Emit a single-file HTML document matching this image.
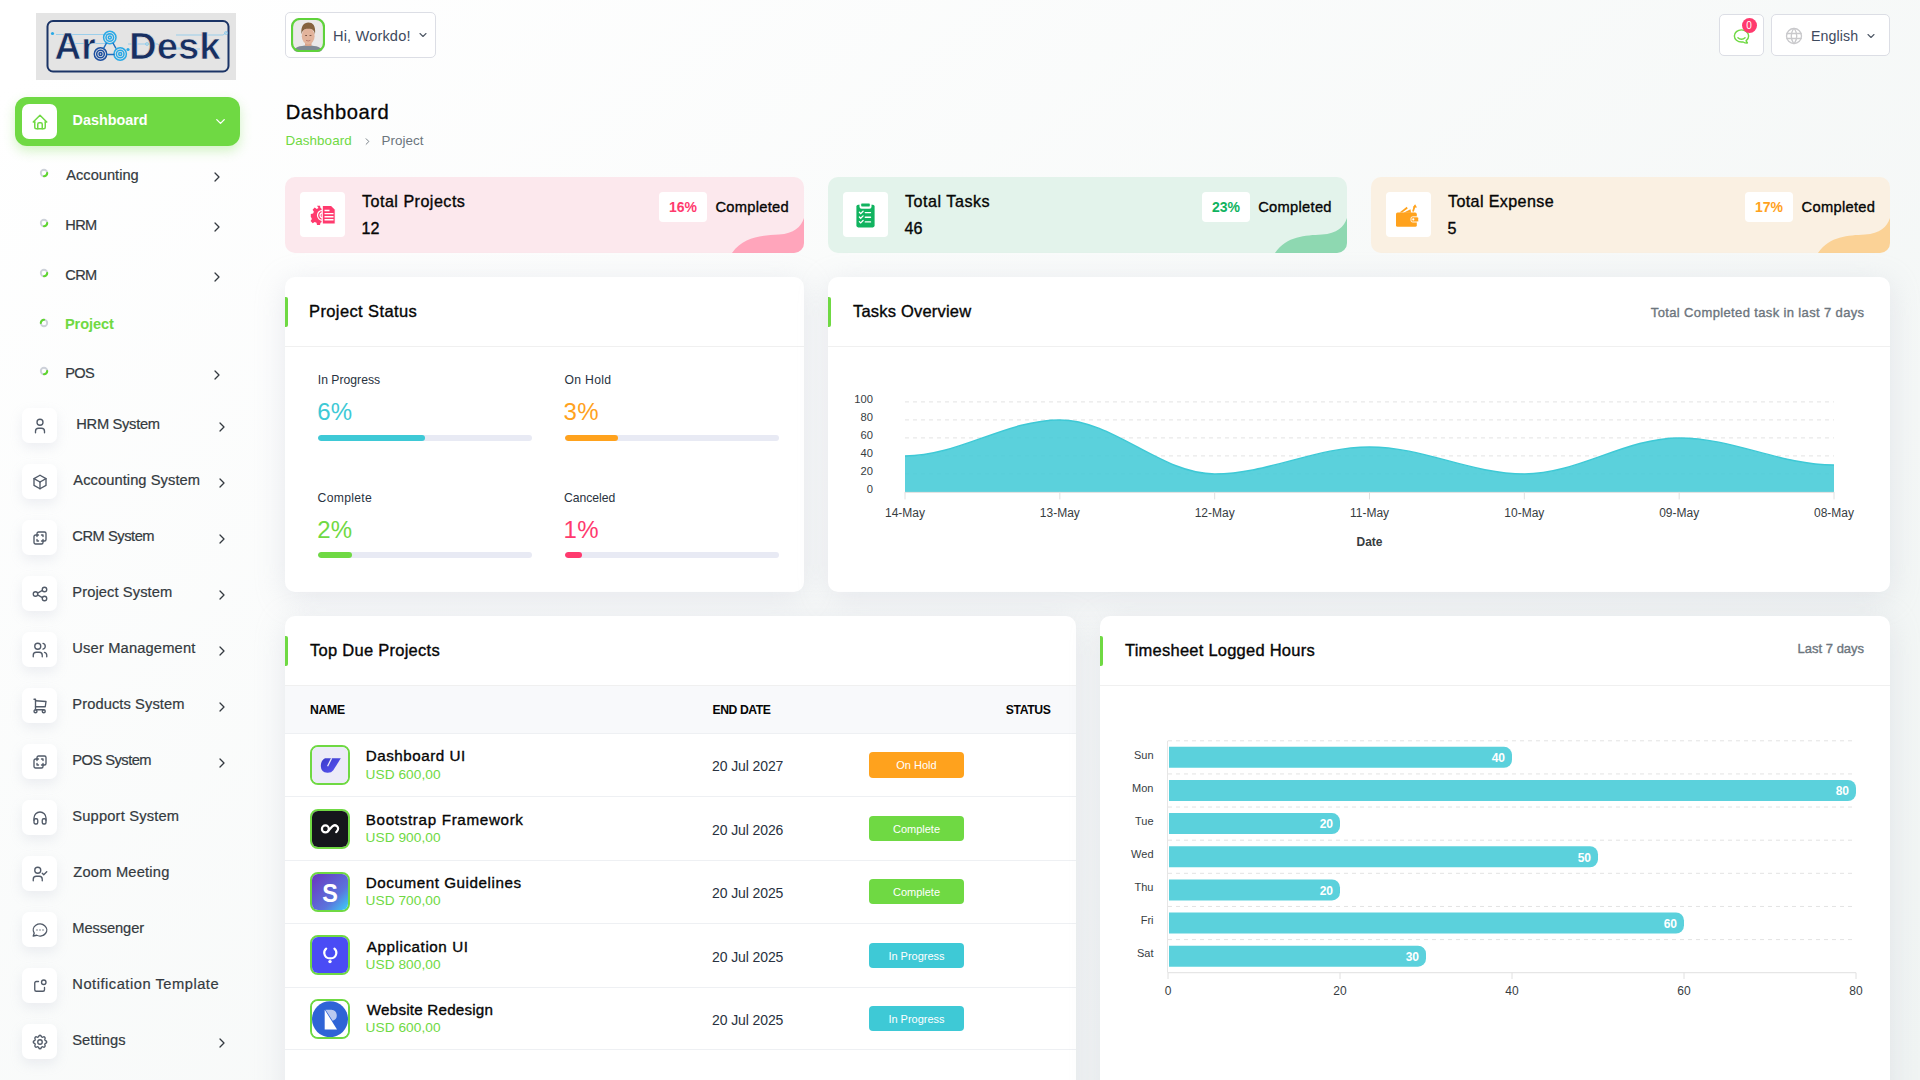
<!DOCTYPE html>
<html><head><meta charset="utf-8"><title>Dashboard</title><style>
*{margin:0;padding:0;box-sizing:border-box}
html,body{width:1920px;height:1080px;overflow:hidden}
body{font-family:"Liberation Sans",sans-serif;position:relative;
 background:linear-gradient(141.55deg, rgba(240,244,243,0) 3.46%, #f0f4f3 99.86%), #ffffff;}
.t{position:absolute;white-space:nowrap;line-height:1}
.ic{position:absolute;display:block}
.abs{position:absolute}
.card{position:absolute;background:#fff;border-radius:10px;box-shadow:0 6px 30px rgba(182,186,203,0.30)}
.ibox{position:absolute;width:35px;height:35px;background:#fff;border-radius:7px;box-shadow:0 5px 12px rgba(182,186,203,0.22)}
.dot{position:absolute;width:8px;height:8px;border-radius:50%;border:1.6px solid #c6cad3;border-right-color:#6fd943;border-bottom-color:#6fd943;transform:rotate(-20deg)}
.gbar{position:absolute;width:3px;height:30px;background:#6fd943;border-radius:0 2px 2px 0}
.hr{position:absolute;height:1px;background:#f0f0f0}
.badge{position:absolute;width:95px;height:25.5px;border-radius:4px;color:#fff;font-size:11px;line-height:27px;text-align:center}
.pbar{position:absolute;height:6px;border-radius:3px;background:#e8eaf4;overflow:hidden}
.pbar i{position:absolute;left:0;top:0;height:6px;border-radius:3px}
.stat{position:absolute;top:177px;width:519px;height:76px;border-radius:10px;overflow:hidden}
.sibox{position:absolute;left:15px;top:15px;width:45px;height:45px;background:#fff;border-radius:4px}
.spct{position:absolute;top:192px;width:48px;height:30px;background:#fff;border-radius:4px;font-size:14px;font-weight:700;line-height:30px;text-align:center}
.pic{position:absolute;width:40px;height:40px;border:2px solid #6fd943;border-radius:8px;overflow:hidden}
</style></head><body>
<svg class="abs" style="left:36px;top:13px" width="200" height="67" viewBox="0 0 200 67">
<rect x="0" y="0" width="200" height="67" fill="#e4e4e4"/>
<rect x="11.5" y="8" width="181" height="50.5" rx="5.5" fill="none" stroke="#1b3466" stroke-width="2"/>
<g stroke="#7cc6ee" stroke-width="0.7" fill="none"><path d="M20 21.5h55M30 30.5h40M92 31h30l3 4h25M140 22h47l4-3M124 36h40"/><circle cx="111" cy="31" r="1.5"/><circle cx="190" cy="20" r="1.5"/></g>
<text x="18.5" y="46.2" font-family="Liberation Sans" font-weight="700" font-size="37.5" fill="#172f61" stroke="#e4e4e4" stroke-width="0.7" textLength="41" lengthAdjust="spacingAndGlyphs">Ar</text>
<text x="93" y="46.2" font-family="Liberation Sans" font-weight="700" font-size="37.5" fill="#172f61" stroke="#e4e4e4" stroke-width="0.7" textLength="91.5" lengthAdjust="spacingAndGlyphs">Desk</text>
<circle cx="16.5" cy="20.5" r="1.6" fill="#2aa9e6"/><circle cx="92" cy="36.5" r="1.6" fill="#2aa9e6"/>
<g fill="none" stroke-width="1.5">
<circle cx="73.8" cy="24.5" r="6.2" stroke="#2aa9e6"/><circle cx="73.8" cy="24.5" r="3.8" stroke="#2aa9e6"/><circle cx="73.8" cy="24.5" r="1.5" stroke="#2aa9e6"/>
<circle cx="64.5" cy="41" r="6.2" stroke="#1d4fa0"/><circle cx="64.5" cy="41" r="3.8" stroke="#1d4fa0"/><circle cx="64.5" cy="41" r="1.5" stroke="#1d4fa0"/>
<circle cx="84.2" cy="41" r="6.2" stroke="#2aa9e6"/><circle cx="84.2" cy="41" r="3.8" stroke="#2aa9e6"/><circle cx="84.2" cy="41" r="1.5" stroke="#2aa9e6"/>
<path d="M70.5 30l-3 5.5M77 30l3 5.5M70.5 41.5h8" stroke="#1d6fc0"/>
</g></svg>
<div class="abs" style="left:15px;top:97px;width:225px;height:49px;background:#6fd943;border-radius:12px;box-shadow:0 5px 12px rgba(111,217,67,0.30)"></div>
<div class="abs" style="left:22px;top:104px;width:35px;height:35px;background:#fff;border-radius:7px"></div>
<svg class="ic" style="left:30.5px;top:113px;" width="18" height="18" viewBox="0 0 24 24" fill="none" stroke="#6fd943" stroke-width="2" stroke-linecap="round" stroke-linejoin="round"><path d="M5 12l-2 0l9 -9l9 9l-2 0"/><path d="M5 12v7a2 2 0 0 0 2 2h10a2 2 0 0 0 2 -2v-7"/><path d="M9 21v-6a2 2 0 0 1 2 -2h2a2 2 0 0 1 2 2v6"/></svg>
<div class="t" style="left:72.50px;top:112.64px;font-size:14.4px;color:#fff;font-weight:700;">Dashboard</div>
<svg class="ic" style="left:212.6px;top:114px;" width="15" height="15" viewBox="0 0 24 24" fill="none" stroke="#fff" stroke-width="2.2" stroke-linecap="round" stroke-linejoin="round"><path d="M6 9l6 6l6 -6"/></svg>
<svg class="abs" style="left:38px;top:167.0px" width="12" height="12" viewBox="0 0 12 12"><circle cx="6" cy="6" r="3.2" fill="none" stroke="#cdd1d9" stroke-width="1.9"/><path d="M9.2 6A3.2 3.2 0 0 1 6 9.2" fill="none" stroke="#5fd62f" stroke-width="2.1" stroke-linecap="round"/></svg>
<div class="t" style="left:66.30px;top:167.85px;font-size:14.6px;color:#343a40;-webkit-text-stroke:0.2px #343a40;letter-spacing:0.023px;">Accounting</div>
<svg class="ic" style="left:208.5px;top:169.1px;" width="16" height="16" viewBox="0 0 24 24" fill="none" stroke="#343a40" stroke-width="1.9" stroke-linecap="round" stroke-linejoin="round"><path d="M9 6l6 6l-6 6"/></svg>
<svg class="abs" style="left:38px;top:216.7px" width="12" height="12" viewBox="0 0 12 12"><circle cx="6" cy="6" r="3.2" fill="none" stroke="#cdd1d9" stroke-width="1.9"/><path d="M9.2 6A3.2 3.2 0 0 1 6 9.2" fill="none" stroke="#5fd62f" stroke-width="2.1" stroke-linecap="round"/></svg>
<div class="t" style="left:65.30px;top:217.55px;font-size:14.6px;color:#343a40;-webkit-text-stroke:0.2px #343a40;letter-spacing:-0.700px;">HRM</div>
<svg class="ic" style="left:208.5px;top:218.79999999999998px;" width="16" height="16" viewBox="0 0 24 24" fill="none" stroke="#343a40" stroke-width="1.9" stroke-linecap="round" stroke-linejoin="round"><path d="M9 6l6 6l-6 6"/></svg>
<svg class="abs" style="left:38px;top:267.0px" width="12" height="12" viewBox="0 0 12 12"><circle cx="6" cy="6" r="3.2" fill="none" stroke="#cdd1d9" stroke-width="1.9"/><path d="M9.2 6A3.2 3.2 0 0 1 6 9.2" fill="none" stroke="#5fd62f" stroke-width="2.1" stroke-linecap="round"/></svg>
<div class="t" style="left:65.30px;top:267.85px;font-size:14.6px;color:#343a40;-webkit-text-stroke:0.2px #343a40;letter-spacing:-0.700px;">CRM</div>
<svg class="ic" style="left:208.5px;top:269.1px;" width="16" height="16" viewBox="0 0 24 24" fill="none" stroke="#343a40" stroke-width="1.9" stroke-linecap="round" stroke-linejoin="round"><path d="M9 6l6 6l-6 6"/></svg>
<svg class="abs" style="left:38px;top:316.8px" width="12" height="12" viewBox="0 0 12 12"><circle cx="6" cy="6" r="3.2" fill="none" stroke="#cdd1d9" stroke-width="1.9"/><path d="M2.8 6A3.2 3.2 0 0 1 6 2.8" fill="none" stroke="#5fd62f" stroke-width="2.1" stroke-linecap="round"/></svg>
<div class="t" style="left:64.90px;top:317.35px;font-size:14.6px;color:#6fd943;font-weight:700;letter-spacing:-0.067px;">Project</div>
<svg class="abs" style="left:38px;top:364.7px" width="12" height="12" viewBox="0 0 12 12"><circle cx="6" cy="6" r="3.2" fill="none" stroke="#cdd1d9" stroke-width="1.9"/><path d="M9.2 6A3.2 3.2 0 0 1 6 9.2" fill="none" stroke="#5fd62f" stroke-width="2.1" stroke-linecap="round"/></svg>
<div class="t" style="left:65.30px;top:365.55px;font-size:14.6px;color:#343a40;-webkit-text-stroke:0.2px #343a40;letter-spacing:-0.700px;">POS</div>
<svg class="ic" style="left:208.5px;top:366.8px;" width="16" height="16" viewBox="0 0 24 24" fill="none" stroke="#343a40" stroke-width="1.9" stroke-linecap="round" stroke-linejoin="round"><path d="M9 6l6 6l-6 6"/></svg>
<div class="ibox" style="left:22px;top:408px"></div>
<svg class="ic" style="left:31.0px;top:417.4px;" width="18" height="18" viewBox="0 0 24 24" fill="none" stroke="#525b69" stroke-width="1.8" stroke-linecap="round" stroke-linejoin="round"><path d="M8 7a4 4 0 1 0 8 0a4 4 0 0 0 -8 0"/><path d="M6 21v-2a4 4 0 0 1 4 -4h4a4 4 0 0 1 4 4v2"/></svg>
<div class="t" style="left:76.30px;top:417.10px;font-size:14.7px;color:#343a40;-webkit-text-stroke:0.2px #343a40;letter-spacing:-0.312px;">HRM System</div>
<svg class="ic" style="left:213.5px;top:419px;" width="16" height="16" viewBox="0 0 24 24" fill="none" stroke="#343a40" stroke-width="1.9" stroke-linecap="round" stroke-linejoin="round"><path d="M9 6l6 6l-6 6"/></svg>
<div class="ibox" style="left:22px;top:464px"></div>
<svg class="ic" style="left:31.0px;top:473.4px;" width="18" height="18" viewBox="0 0 24 24" fill="none" stroke="#525b69" stroke-width="1.8" stroke-linecap="round" stroke-linejoin="round"><path d="M12 3l8 4.5l0 9l-8 4.5l-8 -4.5l0 -9l8 -4.5"/><path d="M12 12l8 -4.5"/><path d="M12 12l0 9"/><path d="M12 12l-8 -4.5"/></svg>
<div class="t" style="left:73.30px;top:473.10px;font-size:14.7px;color:#343a40;-webkit-text-stroke:0.2px #343a40;letter-spacing:0.062px;">Accounting System</div>
<svg class="ic" style="left:213.5px;top:475px;" width="16" height="16" viewBox="0 0 24 24" fill="none" stroke="#343a40" stroke-width="1.9" stroke-linecap="round" stroke-linejoin="round"><path d="M9 6l6 6l-6 6"/></svg>
<div class="ibox" style="left:22px;top:520px"></div>
<svg class="ic" style="left:31.0px;top:529.4px;" width="18" height="18" viewBox="0 0 24 24" fill="none" stroke="#525b69" stroke-width="1.8" stroke-linecap="round" stroke-linejoin="round"><path d="M16 16v2a2 2 0 0 1 -2 2h-8a2 2 0 0 1 -2 -2v-8a2 2 0 0 1 2 -2h2v-2a2 2 0 0 1 2 -2h8a2 2 0 0 1 2 2v8a2 2 0 0 1 -2 2h-2"/><path d="M10 8l-2 0l0 2"/><path d="M8 14l0 2l2 0"/><path d="M14 8l2 0l0 2"/><path d="M16 14l0 2l-2 0"/></svg>
<div class="t" style="left:72.30px;top:529.10px;font-size:14.7px;color:#343a40;-webkit-text-stroke:0.2px #343a40;letter-spacing:-0.466px;">CRM System</div>
<svg class="ic" style="left:213.5px;top:531px;" width="16" height="16" viewBox="0 0 24 24" fill="none" stroke="#343a40" stroke-width="1.9" stroke-linecap="round" stroke-linejoin="round"><path d="M9 6l6 6l-6 6"/></svg>
<div class="ibox" style="left:22px;top:576px"></div>
<svg class="ic" style="left:31.0px;top:585.4px;" width="18" height="18" viewBox="0 0 24 24" fill="none" stroke="#525b69" stroke-width="1.8" stroke-linecap="round" stroke-linejoin="round"><path d="M3 12a3 3 0 1 0 6 0a3 3 0 1 0 -6 0"/><path d="M15 6a3 3 0 1 0 6 0a3 3 0 1 0 -6 0"/><path d="M15 18a3 3 0 1 0 6 0a3 3 0 1 0 -6 0"/><path d="M8.7 10.7l6.6 -3.4"/><path d="M8.7 13.3l6.6 3.4"/></svg>
<div class="t" style="left:72.30px;top:585.10px;font-size:14.7px;color:#343a40;-webkit-text-stroke:0.2px #343a40;letter-spacing:0.093px;">Project System</div>
<svg class="ic" style="left:213.5px;top:587px;" width="16" height="16" viewBox="0 0 24 24" fill="none" stroke="#343a40" stroke-width="1.9" stroke-linecap="round" stroke-linejoin="round"><path d="M9 6l6 6l-6 6"/></svg>
<div class="ibox" style="left:22px;top:632px"></div>
<svg class="ic" style="left:31.0px;top:641.4px;" width="18" height="18" viewBox="0 0 24 24" fill="none" stroke="#525b69" stroke-width="1.8" stroke-linecap="round" stroke-linejoin="round"><path d="M5 7a4 4 0 1 0 8 0a4 4 0 1 0 -8 0"/><path d="M3 21v-2a4 4 0 0 1 4 -4h4a4 4 0 0 1 4 4v2"/><path d="M16 3.13a4 4 0 0 1 0 7.75"/><path d="M21 21v-2a4 4 0 0 0 -3 -3.85"/></svg>
<div class="t" style="left:72.30px;top:641.10px;font-size:14.7px;color:#343a40;-webkit-text-stroke:0.2px #343a40;letter-spacing:0.157px;">User Management</div>
<svg class="ic" style="left:213.5px;top:643px;" width="16" height="16" viewBox="0 0 24 24" fill="none" stroke="#343a40" stroke-width="1.9" stroke-linecap="round" stroke-linejoin="round"><path d="M9 6l6 6l-6 6"/></svg>
<div class="ibox" style="left:22px;top:688px"></div>
<svg class="ic" style="left:31.0px;top:697.4px;" width="18" height="18" viewBox="0 0 24 24" fill="none" stroke="#525b69" stroke-width="1.8" stroke-linecap="round" stroke-linejoin="round"><path d="M4 19a2 2 0 1 0 4 0a2 2 0 1 0 -4 0"/><path d="M15 19a2 2 0 1 0 4 0a2 2 0 1 0 -4 0"/><path d="M17 17h-11v-14h-2"/><path d="M6 5l14 1l-1 7h-13"/></svg>
<div class="t" style="left:72.30px;top:697.10px;font-size:14.7px;color:#343a40;-webkit-text-stroke:0.2px #343a40;letter-spacing:0.086px;">Products System</div>
<svg class="ic" style="left:213.5px;top:699px;" width="16" height="16" viewBox="0 0 24 24" fill="none" stroke="#343a40" stroke-width="1.9" stroke-linecap="round" stroke-linejoin="round"><path d="M9 6l6 6l-6 6"/></svg>
<div class="ibox" style="left:22px;top:744px"></div>
<svg class="ic" style="left:31.0px;top:753.4px;" width="18" height="18" viewBox="0 0 24 24" fill="none" stroke="#525b69" stroke-width="1.8" stroke-linecap="round" stroke-linejoin="round"><path d="M16 16v2a2 2 0 0 1 -2 2h-8a2 2 0 0 1 -2 -2v-8a2 2 0 0 1 2 -2h2v-2a2 2 0 0 1 2 -2h8a2 2 0 0 1 2 2v8a2 2 0 0 1 -2 2h-2"/><path d="M10 8l-2 0l0 2"/><path d="M8 14l0 2l2 0"/><path d="M14 8l2 0l0 2"/><path d="M16 14l0 2l-2 0"/></svg>
<div class="t" style="left:72.30px;top:753.10px;font-size:14.7px;color:#343a40;-webkit-text-stroke:0.2px #343a40;letter-spacing:-0.533px;">POS System</div>
<svg class="ic" style="left:213.5px;top:755px;" width="16" height="16" viewBox="0 0 24 24" fill="none" stroke="#343a40" stroke-width="1.9" stroke-linecap="round" stroke-linejoin="round"><path d="M9 6l6 6l-6 6"/></svg>
<div class="ibox" style="left:22px;top:800px"></div>
<svg class="ic" style="left:31.0px;top:809.4px;" width="18" height="18" viewBox="0 0 24 24" fill="none" stroke="#525b69" stroke-width="1.8" stroke-linecap="round" stroke-linejoin="round"><path d="M4 15a2 2 0 0 1 2 -2h1a2 2 0 0 1 2 2v3a2 2 0 0 1 -2 2h-1a2 2 0 0 1 -2 -2z"/><path d="M15 15a2 2 0 0 1 2 -2h1a2 2 0 0 1 2 2v3a2 2 0 0 1 -2 2h-1a2 2 0 0 1 -2 -2z"/><path d="M4 15v-3a8 8 0 0 1 16 0v3"/></svg>
<div class="t" style="left:72.30px;top:809.10px;font-size:14.7px;color:#343a40;-webkit-text-stroke:0.2px #343a40;letter-spacing:0.168px;">Support System</div>
<div class="ibox" style="left:22px;top:856px"></div>
<svg class="ic" style="left:31.0px;top:865.4px;" width="18" height="18" viewBox="0 0 24 24" fill="none" stroke="#525b69" stroke-width="1.8" stroke-linecap="round" stroke-linejoin="round"><path d="M5 7a4 4 0 1 0 8 0a4 4 0 1 0 -8 0"/><path d="M3 21v-2a4 4 0 0 1 4 -4h4a4 4 0 0 1 4 4v2"/><path d="M15 11l2 2l4 -4"/></svg>
<div class="t" style="left:73.30px;top:865.10px;font-size:14.7px;color:#343a40;-webkit-text-stroke:0.2px #343a40;letter-spacing:0.200px;">Zoom Meeting</div>
<div class="ibox" style="left:22px;top:912px"></div>
<svg class="ic" style="left:31.0px;top:921.4px;" width="18" height="18" viewBox="0 0 24 24" fill="none" stroke="#525b69" stroke-width="1.8" stroke-linecap="round" stroke-linejoin="round"><path d="M3 20l1.3 -3.9c-2.324 -3.437 -1.426 -7.872 2.1 -10.374c3.526 -2.501 8.59 -2.296 11.845 .48c3.255 2.777 3.695 7.266 1.029 10.501c-2.666 3.235 -7.615 4.215 -11.574 2.293l-4.7 1"/><path d="M8 12l0 .01"/><path d="M12 12l0 .01"/><path d="M16 12l0 .01"/></svg>
<div class="t" style="left:72.30px;top:921.10px;font-size:14.7px;color:#343a40;-webkit-text-stroke:0.2px #343a40;letter-spacing:-0.102px;">Messenger</div>
<div class="ibox" style="left:22px;top:968px"></div>
<svg class="ic" style="left:31.0px;top:977.4px;" width="18" height="18" viewBox="0 0 24 24" fill="none" stroke="#525b69" stroke-width="1.8" stroke-linecap="round" stroke-linejoin="round"><path d="M10 6h-3a2 2 0 0 0 -2 2v9a2 2 0 0 0 2 2h9a2 2 0 0 0 2 -2v-3"/><path d="M14 7a3 3 0 1 0 6 0a3 3 0 1 0 -6 0"/></svg>
<div class="t" style="left:72.30px;top:977.10px;font-size:14.7px;color:#343a40;-webkit-text-stroke:0.2px #343a40;letter-spacing:0.512px;">Notification Template</div>
<div class="ibox" style="left:22px;top:1024px"></div>
<svg class="ic" style="left:31.0px;top:1033.4px;" width="18" height="18" viewBox="0 0 24 24" fill="none" stroke="#525b69" stroke-width="1.8" stroke-linecap="round" stroke-linejoin="round"><path d="M10.325 4.317c.426 -1.756 2.924 -1.756 3.35 0a1.724 1.724 0 0 0 2.573 1.066c1.543 -.94 3.31 .826 2.37 2.37a1.724 1.724 0 0 0 1.065 2.572c1.756 .426 1.756 2.924 0 3.35a1.724 1.724 0 0 0 -1.066 2.573c.94 1.543 -.826 3.31 -2.37 2.37a1.724 1.724 0 0 0 -2.572 1.065c-.426 1.756 -2.924 1.756 -3.35 0a1.724 1.724 0 0 0 -2.573 -1.066c-1.543 .94 -3.31 -.826 -2.37 -2.37a1.724 1.724 0 0 0 -1.065 -2.572c-1.756 -.426 -1.756 -2.924 0 -3.35a1.724 1.724 0 0 0 1.066 -2.573c-.94 -1.543 .826 -3.31 2.37 -2.37c1 .608 2.296 .07 2.572 -1.065z"/><path d="M9 12a3 3 0 1 0 6 0a3 3 0 0 0 -6 0"/></svg>
<div class="t" style="left:72.30px;top:1033.10px;font-size:14.7px;color:#343a40;-webkit-text-stroke:0.2px #343a40;letter-spacing:0.028px;">Settings</div>
<svg class="ic" style="left:213.5px;top:1035px;" width="16" height="16" viewBox="0 0 24 24" fill="none" stroke="#343a40" stroke-width="1.9" stroke-linecap="round" stroke-linejoin="round"><path d="M9 6l6 6l-6 6"/></svg>
<div class="abs" style="left:285px;top:12px;width:151px;height:46px;background:#fff;border:1px solid #dcdee5;border-radius:5px"></div>
<svg class="abs" style="left:291px;top:18px" width="34" height="34" viewBox="0 0 34 34">
<defs><clipPath id="avc"><rect x="0" y="0" width="34" height="34" rx="8"/></clipPath></defs>
<g clip-path="url(#avc)"><rect width="34" height="34" fill="#ebe9e9"/>
<path d="M2 34C3 29.5 8 27.5 17 27.5S31 29.5 32 34Z" fill="#7f8894"/>
<rect x="14" y="22" width="6.5" height="6" fill="#d7a48b"/>
<ellipse cx="17.2" cy="18.2" rx="6.4" ry="8.3" fill="#e2b39b"/>
<path d="M10.5 16.5C9.5 8 13 4.6 17.4 4.6S25 7.5 24 16.5C23.4 12.8 21.8 10.8 17.3 10.8S11.2 12.8 10.5 16.5Z" fill="#85623f"/>
<path d="M14.2 17.5h1.8M18.6 17.5h1.8" stroke="#6b4a3a" stroke-width="0.9"/>
<path d="M15 22.3q2.2 1.4 4.4 0" stroke="#b9776a" stroke-width="0.9" fill="none"/>
</g>
<rect x="1" y="1" width="32" height="32" rx="8" fill="none" stroke="#5fd23b" stroke-width="2.2"/></svg>
<div class="t" style="left:333.00px;top:28.55px;font-size:14.6px;color:#3e4a5e;letter-spacing:0.150px;">Hi, Workdo!</div>
<svg class="ic" style="left:416.5px;top:29px;" width="12" height="12" viewBox="0 0 24 24" fill="none" stroke="#4f5866" stroke-width="2.2" stroke-linecap="round" stroke-linejoin="round"><path d="M6 9l6 6l6 -6"/></svg>
<div class="abs" style="left:1719px;top:14px;width:45px;height:42px;background:#fff;border:1px solid #dcdee5;border-radius:5px"></div>
<svg class="ic" style="left:1732px;top:27px;" width="19" height="19" viewBox="0 0 24 24" fill="none" stroke="#6fd943" stroke-width="1.8" stroke-linecap="round" stroke-linejoin="round"><path d="M17.802 17.292s.077 -.055 .2 -.149c1.843 -1.425 3 -3.49 3 -5.789c0 -4.286 -4.03 -7.764 -9 -7.764c-4.97 0 -9 3.478 -9 7.764c0 4.288 4.03 7.646 9 7.646c.424 0 1.12 -.028 2.088 -.084c1.262 .82 3.104 1.493 4.716 1.493c.499 0 .734 -.41 .414 -.828c-.486 -.596 -1.156 -1.551 -1.416 -2.29z"/><path d="M7.5 13.5c2.5 2.5 6.5 2.5 9 0"/></svg>
<div class="abs" style="left:1741.5px;top:17.5px;width:15px;height:15px;border-radius:50%;background:#ff3a6e;color:#fff;font-size:10px;line-height:15px;text-align:center">0</div>
<div class="abs" style="left:1771px;top:14px;width:119px;height:42px;background:#fff;border:1px solid #dcdee5;border-radius:5px"></div>
<svg class="ic" style="left:1783.5px;top:26px;" width="20" height="20" viewBox="0 0 24 24" fill="none" stroke="#c9c9cc" stroke-width="1.6" stroke-linecap="round" stroke-linejoin="round"><path d="M3 12a9 9 0 1 0 18 0a9 9 0 0 0 -18 0"/><path d="M3.6 9h16.8"/><path d="M3.6 15h16.8"/><path d="M11.5 3a17 17 0 0 0 0 18"/><path d="M12.5 3a17 17 0 0 1 0 18"/></svg>
<div class="t" style="left:1811.00px;top:28.84px;font-size:14.2px;color:#3e4a5e;letter-spacing:0.100px;">English</div>
<svg class="ic" style="left:1864.5px;top:30px;" width="12" height="12" viewBox="0 0 24 24" fill="none" stroke="#4f5866" stroke-width="2.2" stroke-linecap="round" stroke-linejoin="round"><path d="M6 9l6 6l6 -6"/></svg>
<div class="t" style="left:285.75px;top:101.70px;font-size:20.2px;color:#060606;-webkit-text-stroke:0.3px #060606;letter-spacing:0.518px;">Dashboard</div>
<div class="t" style="left:285.40px;top:134.43px;font-size:13.4px;color:#6fd943;letter-spacing:0.099px;">Dashboard</div>
<svg class="ic" style="left:361.5px;top:135.5px;" width="11" height="11" viewBox="0 0 24 24" fill="none" stroke="#6c757d" stroke-width="2" stroke-linecap="round" stroke-linejoin="round"><path d="M9 6l6 6l-6 6"/></svg>
<div class="t" style="left:381.50px;top:134.43px;font-size:13.4px;color:#6c757d;letter-spacing:0.067px;">Project</div>
<div class="stat" style="left:285px;background:#fce8ed"><svg class="abs" style="left:0;top:0" width="519" height="76" viewBox="0 0 519 76"><path d="M447 76C459 59 477 58.6 494 57.6C509 56.6 516 50 519 41V76Z" fill="#ffa5bb"/></svg><div class="sibox"></div></div>
<svg class="abs" style="left:309px;top:204px" width="28" height="22" viewBox="0 0 28 22">
<path d="M8 1.8h3l.5 2.3 1.8.8 2-1.3 2 2-1.2 2 .8 1.8 2.3.5v3l-2.3.5-.8 1.8 1.2 2-2 2-2-1.3-1.8.8-.5 2.3h-3l-.5-2.3-1.8-.8-2 1.3-2.1-2.1 1.3-2-.8-1.8L1.8 13V10l2.3-.5.8-1.8-1.3-2 2.1-2.1 2 1.3 1.8-.8z" fill="#ff3a6e"/>
<path d="M13.5 6.3a5 5 0 0 0 0 10M13.5 8.8a2.5 2.5 0 0 0 0 5" fill="none" stroke="#fff" stroke-width="1.2"/>
<path d="M13.2 1.5h9.3l3.8 3.8v14.8h-13.1z" fill="#ff3a6e" stroke="#fff" stroke-width="1.2"/>
<path d="M15.5 6.5h5M15.5 9.6h9M15.5 12.7h9M15.5 15.8h9" stroke="#fff" stroke-width="1.4"/></svg>
<div class="t" style="left:362.00px;top:193.31px;font-size:16.1px;color:#060606;-webkit-text-stroke:0.35px #060606;letter-spacing:0.485px;">Total Projects</div>
<div class="t" style="left:361.50px;top:220.41px;font-size:16.1px;color:#060606;-webkit-text-stroke:0.35px #060606;">12</div>
<div class="spct" style="left:659px;color:#ff3a6e">16%</div>
<div class="t" style="left:715.40px;top:199.80px;font-size:14.7px;color:#060606;-webkit-text-stroke:0.35px #060606;letter-spacing:0.289px;">Completed</div>
<div class="stat" style="left:828px;background:#e3f3eb"><svg class="abs" style="left:0;top:0" width="519" height="76" viewBox="0 0 519 76"><path d="M447 76C459 59 477 58.6 494 57.6C509 56.6 516 50 519 41V76Z" fill="#8ed8b1"/></svg><div class="sibox"></div></div>
<svg class="abs" style="left:855.5px;top:202.5px" width="19" height="25" viewBox="0 0 19 25">
<rect x="0.4" y="1.8" width="18.2" height="22.6" rx="1.8" fill="#10b35f"/>
<path d="M3.5 1.2h12v2.5a2 2 0 0 1 -2 2h-8a2 2 0 0 1 -2 -2z" fill="#fff"/>
<rect x="5.2" y="0.4" width="8.6" height="3" rx="0.6" fill="#10b35f"/>
<path d="M3.4 9.3l1.3 1.3 2.4-2.4M3.4 14l1.3 1.3 2.4-2.4M3.4 18.6l1.3 1.3 2.4-2.4" stroke="#fff" stroke-width="1.3" fill="none" stroke-linecap="round"/>
<path d="M9.3 9.6h5.2M9.3 14.3h5.2M9.3 18.9h5.2" stroke="#fff" stroke-width="1.4" stroke-linecap="round"/></svg>
<div class="t" style="left:905.00px;top:193.31px;font-size:16.1px;color:#060606;-webkit-text-stroke:0.35px #060606;letter-spacing:0.530px;">Total Tasks</div>
<div class="t" style="left:904.50px;top:220.41px;font-size:16.1px;color:#060606;-webkit-text-stroke:0.35px #060606;">46</div>
<div class="spct" style="left:1202px;color:#10b35f">23%</div>
<div class="t" style="left:1258.20px;top:199.80px;font-size:14.7px;color:#060606;-webkit-text-stroke:0.35px #060606;letter-spacing:0.286px;">Completed</div>
<div class="stat" style="left:1371px;background:#faf0e2"><svg class="abs" style="left:0;top:0" width="519" height="76" viewBox="0 0 519 76"><path d="M447 76C459 59 477 58.6 494 57.6C509 56.6 516 50 519 41V76Z" fill="#fbd296"/></svg><div class="sibox"></div></div>
<svg class="abs" style="left:1395px;top:203px" width="26" height="25" viewBox="0 0 26 25">
<path d="M4.5 9.5l7.3-5.8 .9 1.8-5.5 4z" fill="#ffa21d"/>
<path d="M8.5 9.7l7-3.4 .6 3.4z" fill="#ffa21d"/>
<path d="M18.2 7.8l1.4-4.3" stroke="#ffa21d" stroke-width="1.8" stroke-linecap="round"/><path d="M17.8 4.5l2.3-3.3 1.9 3.3z" fill="#ffa21d"/>
<rect x="1" y="9.6" width="20.8" height="14.2" rx="1.6" fill="#ffa21d"/>
<rect x="16" y="13.8" width="7.7" height="5.2" rx="1.6" fill="#ffa21d" stroke="#fff" stroke-width="0.9"/>
<circle cx="18.3" cy="16.4" r="1.1" fill="#fff"/></svg>
<div class="t" style="left:1448.00px;top:193.31px;font-size:16.1px;color:#060606;-webkit-text-stroke:0.35px #060606;letter-spacing:0.375px;">Total Expense</div>
<div class="t" style="left:1447.50px;top:220.41px;font-size:16.1px;color:#060606;-webkit-text-stroke:0.35px #060606;">5</div>
<div class="spct" style="left:1745px;color:#ffa21d">17%</div>
<div class="t" style="left:1801.60px;top:199.80px;font-size:14.7px;color:#060606;-webkit-text-stroke:0.35px #060606;letter-spacing:0.286px;">Completed</div>
<div class="card" style="left:285px;top:277px;width:519px;height:315px"></div>
<div class="gbar" style="left:285px;top:297px"></div>
<div class="t" style="left:309.00px;top:303.12px;font-size:16.5px;color:#060606;-webkit-text-stroke:0.35px #060606;letter-spacing:0.385px;">Project Status</div>
<div class="hr" style="left:285px;top:345.5px;width:519px"></div>
<div class="t" style="left:317.80px;top:374.02px;font-size:12.2px;color:#293240;">In Progress</div>
<div class="t" style="left:317.20px;top:400.24px;font-size:24px;color:#3ec9d6;letter-spacing:0.300px;">6%</div>
<div class="pbar" style="left:318.2px;top:435px;width:214px"><i style="width:107.0px;background:#3ec9d6"></i></div>
<div class="t" style="left:564.50px;top:374.02px;font-size:12.2px;color:#293240;letter-spacing:0.300px;">On Hold</div>
<div class="t" style="left:563.50px;top:400.24px;font-size:24px;color:#ffa21d;letter-spacing:0.300px;">3%</div>
<div class="pbar" style="left:564.5px;top:435px;width:214px"><i style="width:53.5px;background:#ffa21d"></i></div>
<div class="t" style="left:317.60px;top:491.52px;font-size:12.2px;color:#293240;letter-spacing:0.285px;">Complete</div>
<div class="t" style="left:317.20px;top:517.74px;font-size:24px;color:#6fd943;letter-spacing:0.300px;">2%</div>
<div class="pbar" style="left:318.2px;top:551.7px;width:214px"><i style="width:34.2px;background:#6fd943"></i></div>
<div class="t" style="left:564.00px;top:491.52px;font-size:12.2px;color:#293240;letter-spacing:-0.029px;">Canceled</div>
<div class="t" style="left:563.50px;top:517.74px;font-size:24px;color:#ff3a6e;letter-spacing:0.300px;">1%</div>
<div class="pbar" style="left:564.5px;top:551.7px;width:214px"><i style="width:17.1px;background:#ff3a6e"></i></div>
<div class="card" style="left:828px;top:277px;width:1062px;height:315px"></div>
<div class="gbar" style="left:828px;top:297px"></div>
<div class="t" style="left:853.00px;top:303.12px;font-size:16.5px;color:#060606;-webkit-text-stroke:0.35px #060606;letter-spacing:0.199px;">Tasks Overview</div>
<div class="t" style="right:55.54px;top:306.03px;font-size:13px;color:#6c757d;-webkit-text-stroke:0.35px #6c757d;letter-spacing:0.364px;">Total Completed task in last 7 days</div>
<div class="hr" style="left:828px;top:345.5px;width:1062px"></div>
<svg class="abs" style="left:0;top:0" width="1920" height="1080" viewBox="0 0 1920 1080"><line x1="905" y1="401.90" x2="1834" y2="401.90" stroke="#e3e3e3" stroke-width="1" stroke-dasharray="4 4"/><line x1="905" y1="419.90" x2="1834" y2="419.90" stroke="#e3e3e3" stroke-width="1" stroke-dasharray="4 4"/><line x1="905" y1="437.90" x2="1834" y2="437.90" stroke="#e3e3e3" stroke-width="1" stroke-dasharray="4 4"/><line x1="905" y1="455.90" x2="1834" y2="455.90" stroke="#e3e3e3" stroke-width="1" stroke-dasharray="4 4"/><line x1="905" y1="473.90" x2="1834" y2="473.90" stroke="#e3e3e3" stroke-width="1" stroke-dasharray="4 4"/><path d="M905.00 455.90 C959.19 455.90 1005.64 419.90 1059.83 419.90 C1114.03 419.90 1160.47 473.90 1214.67 473.90 C1268.86 473.90 1315.31 446.90 1369.50 446.90 C1423.69 446.90 1470.14 473.90 1524.33 473.90 C1578.53 473.90 1624.97 437.90 1679.17 437.90 C1733.36 437.90 1779.81 464.90 1834.00 464.90 L1834 491.9 L905 491.9 Z" fill="#3ec9d6" fill-opacity="0.85"/><path d="M905.00 455.90 C959.19 455.90 1005.64 419.90 1059.83 419.90 C1114.03 419.90 1160.47 473.90 1214.67 473.90 C1268.86 473.90 1315.31 446.90 1369.50 446.90 C1423.69 446.90 1470.14 473.90 1524.33 473.90 C1578.53 473.90 1624.97 437.90 1679.17 437.90 C1733.36 437.90 1779.81 464.90 1834.00 464.90" fill="none" stroke="#3ec9d6" stroke-width="1.5"/><line x1="905" y1="492.4" x2="1834" y2="492.4" stroke="#e0e0e0" stroke-width="1"/><line x1="905.00" y1="491.9" x2="905.00" y2="499.4" stroke="#e0e0e0" stroke-width="1"/><text x="905.00" y="517.2" text-anchor="middle" font-family="Liberation Sans" font-size="12" fill="#373d3f">14-May</text><line x1="1059.83" y1="491.9" x2="1059.83" y2="499.4" stroke="#e0e0e0" stroke-width="1"/><text x="1059.83" y="517.2" text-anchor="middle" font-family="Liberation Sans" font-size="12" fill="#373d3f">13-May</text><line x1="1214.67" y1="491.9" x2="1214.67" y2="499.4" stroke="#e0e0e0" stroke-width="1"/><text x="1214.67" y="517.2" text-anchor="middle" font-family="Liberation Sans" font-size="12" fill="#373d3f">12-May</text><line x1="1369.50" y1="491.9" x2="1369.50" y2="499.4" stroke="#e0e0e0" stroke-width="1"/><text x="1369.50" y="517.2" text-anchor="middle" font-family="Liberation Sans" font-size="12" fill="#373d3f">11-May</text><line x1="1524.33" y1="491.9" x2="1524.33" y2="499.4" stroke="#e0e0e0" stroke-width="1"/><text x="1524.33" y="517.2" text-anchor="middle" font-family="Liberation Sans" font-size="12" fill="#373d3f">10-May</text><line x1="1679.17" y1="491.9" x2="1679.17" y2="499.4" stroke="#e0e0e0" stroke-width="1"/><text x="1679.17" y="517.2" text-anchor="middle" font-family="Liberation Sans" font-size="12" fill="#373d3f">09-May</text><line x1="1834.00" y1="491.9" x2="1834.00" y2="499.4" stroke="#e0e0e0" stroke-width="1"/><text x="1834.00" y="517.2" text-anchor="middle" font-family="Liberation Sans" font-size="12" fill="#373d3f">08-May</text><text x="873" y="403.20" text-anchor="end" font-family="Liberation Sans" font-size="11.2" fill="#373d3f">100</text><text x="873" y="421.20" text-anchor="end" font-family="Liberation Sans" font-size="11.2" fill="#373d3f">80</text><text x="873" y="439.20" text-anchor="end" font-family="Liberation Sans" font-size="11.2" fill="#373d3f">60</text><text x="873" y="457.20" text-anchor="end" font-family="Liberation Sans" font-size="11.2" fill="#373d3f">40</text><text x="873" y="475.20" text-anchor="end" font-family="Liberation Sans" font-size="11.2" fill="#373d3f">20</text><text x="873" y="493.20" text-anchor="end" font-family="Liberation Sans" font-size="11.2" fill="#373d3f">0</text><text x="1369.5" y="545.8" text-anchor="middle" font-family="Liberation Sans" font-size="12" font-weight="700" fill="#373d3f">Date</text></svg>
<div class="card" style="left:285px;top:616px;width:791px;height:520px"></div>
<div class="gbar" style="left:285px;top:636px"></div>
<div class="t" style="left:310.00px;top:642.12px;font-size:16.5px;color:#060606;-webkit-text-stroke:0.35px #060606;letter-spacing:0.267px;">Top Due Projects</div>
<div class="hr" style="left:285px;top:684.5px;width:791px"></div>
<div class="abs" style="left:285px;top:685.5px;width:791px;height:47.5px;background:#f8f9fb"></div>
<div class="t" style="left:309.90px;top:703.52px;font-size:12.2px;color:#060606;font-weight:700;letter-spacing:-0.200px;">NAME</div>
<div class="t" style="left:712.50px;top:703.52px;font-size:12.2px;color:#060606;font-weight:700;letter-spacing:-0.429px;">END DATE</div>
<div class="t" style="right:869.60px;top:703.52px;font-size:12.2px;color:#060606;font-weight:700;letter-spacing:-0.400px;">STATUS</div>
<div class="hr" style="left:285px;top:733.0px;width:791px;background:#eef0f3"></div>
<div class="pic" style="left:310px;top:745.0px"><svg width="36" height="36" viewBox="0 0 36 36"><defs><linearGradient id="dug" x1="0" y1="0" x2="1" y2="1"><stop offset="0" stop-color="#3a3cc9"/><stop offset="1" stop-color="#5b56f5"/></linearGradient></defs><rect width="36" height="36" fill="#ecebf8"/><path d="M13 11.3H28.8L21.3 23.3Q19.3 26 15.3 25.8Q9 25.3 8.8 19Q9 13.2 13 11.3Z" fill="url(#dug)"/><path d="M19.6 11.3L15.6 19.2" stroke="#ecebf8" stroke-width="1.3"/></svg></div>
<div class="t" style="left:365.80px;top:748.15px;font-size:15.2px;color:#060606;-webkit-text-stroke:0.35px #060606;letter-spacing:0.509px;">Dashboard UI</div>
<div class="t" style="left:365.50px;top:767.79px;font-size:13.7px;color:#6fd943;letter-spacing:0.056px;">USD 600,00</div>
<div class="t" style="left:712.00px;top:759.14px;font-size:14px;color:#293240;letter-spacing:-0.100px;">20 Jul 2027</div>
<div class="badge" style="left:869px;top:752.1px;background:#ffa21d">On Hold</div>
<div class="hr" style="left:285px;top:795.9px;width:791px;background:#eef0f3"></div>
<div class="pic" style="left:310px;top:809.1px"><svg width="36" height="36" viewBox="0 0 36 36"><rect width="36" height="36" fill="#15171c"/><g fill="none" stroke="#fff" stroke-width="2.2" stroke-linecap="round"><circle cx="13.4" cy="17.9" r="3.5"/><path d="M15.9 20.3L20.2 15.6C21.5 14.2 23.6 14 25 15.1C26.4 16.3 26.5 18.4 25.2 19.9L24.2 21.1"/></g></svg></div>
<div class="t" style="left:365.80px;top:811.55px;font-size:15.2px;color:#060606;-webkit-text-stroke:0.35px #060606;letter-spacing:0.666px;">Bootstrap Framework</div>
<div class="t" style="left:365.50px;top:831.19px;font-size:13.7px;color:#6fd943;letter-spacing:0.056px;">USD 900,00</div>
<div class="t" style="left:712.00px;top:822.54px;font-size:14px;color:#293240;letter-spacing:-0.100px;">20 Jul 2026</div>
<div class="badge" style="left:869px;top:815.5px;background:#6fd943">Complete</div>
<div class="hr" style="left:285px;top:859.9px;width:791px;background:#eef0f3"></div>
<div class="pic" style="left:310px;top:872.3px"><svg width="36" height="36" viewBox="0 0 36 36"><defs><linearGradient id="dg" x1="0" y1="0" x2="1" y2="1"><stop offset="0" stop-color="#6a35c0"/><stop offset="0.65" stop-color="#5b74dc"/><stop offset="1" stop-color="#3ad0f8"/></linearGradient></defs><rect width="36" height="36" fill="url(#dg)"/><text x="18" y="28.2" text-anchor="middle" font-family="Liberation Sans" font-weight="700" font-size="26.6" fill="#fff" transform="translate(18 0) scale(0.88 1) translate(-18 0)">S</text></svg></div>
<div class="t" style="left:365.80px;top:874.55px;font-size:15.2px;color:#060606;-webkit-text-stroke:0.35px #060606;letter-spacing:0.556px;">Document Guidelines</div>
<div class="t" style="left:365.50px;top:894.19px;font-size:13.7px;color:#6fd943;letter-spacing:0.056px;">USD 700,00</div>
<div class="t" style="left:712.00px;top:885.54px;font-size:14px;color:#293240;letter-spacing:-0.100px;">20 Jul 2025</div>
<div class="badge" style="left:869px;top:878.5px;background:#6fd943">Complete</div>
<div class="hr" style="left:285px;top:922.8px;width:791px;background:#eef0f3"></div>
<div class="pic" style="left:310px;top:935.4px"><svg width="36" height="36" viewBox="0 0 36 36"><rect width="36" height="36" fill="#4a4cf5"/><path d="M14.2 11.6Q11.8 13.6 12.3 16.6Q13.2 21.4 18.3 21.4Q23.4 21.4 24.3 16.6Q24.8 13.6 22.4 11.6" fill="none" stroke="#fff" stroke-width="2.2" stroke-linecap="round"/><circle cx="18" cy="24.6" r="1.7" fill="#fff"/></svg></div>
<div class="t" style="left:366.80px;top:938.75px;font-size:15.2px;color:#060606;-webkit-text-stroke:0.35px #060606;letter-spacing:0.569px;">Application UI</div>
<div class="t" style="left:365.50px;top:958.39px;font-size:13.7px;color:#6fd943;letter-spacing:0.056px;">USD 800,00</div>
<div class="t" style="left:712.00px;top:949.74px;font-size:14px;color:#293240;letter-spacing:-0.100px;">20 Jul 2025</div>
<div class="badge" style="left:869px;top:942.7px;background:#3ec9d6">In Progress</div>
<div class="hr" style="left:285px;top:986.7px;width:791px;background:#eef0f3"></div>
<div class="pic" style="left:310px;top:999.4px"><svg width="36" height="36" viewBox="0 0 36 36"><rect width="36" height="36" fill="#fff"/><circle cx="18" cy="18.2" r="18" fill="#2f64d6"/><path d="M12.7 8.7V28.4H25Z" fill="#fff"/><path d="M13.5 8.7H19.5A5.6 5.6 0 0 1 20.6 19.7Z" fill="#b9c9f0"/></svg></div>
<div class="t" style="left:366.80px;top:1001.75px;font-size:15.2px;color:#060606;-webkit-text-stroke:0.35px #060606;letter-spacing:0.213px;">Website Redesign</div>
<div class="t" style="left:365.50px;top:1021.39px;font-size:13.7px;color:#6fd943;letter-spacing:0.056px;">USD 600,00</div>
<div class="t" style="left:712.00px;top:1012.74px;font-size:14px;color:#293240;letter-spacing:-0.100px;">20 Jul 2025</div>
<div class="badge" style="left:869px;top:1005.7px;background:#3ec9d6">In Progress</div>
<div class="hr" style="left:285px;top:1049.2px;width:791px;background:#eef0f3"></div>
<div class="card" style="left:1100px;top:616px;width:790px;height:520px"></div>
<div class="gbar" style="left:1100px;top:636px"></div>
<div class="t" style="left:1125.00px;top:642.12px;font-size:16.5px;color:#060606;-webkit-text-stroke:0.35px #060606;letter-spacing:0.238px;">Timesheet Logged Hours</div>
<div class="t" style="right:55.90px;top:642.03px;font-size:13px;color:#6c757d;-webkit-text-stroke:0.35px #6c757d;">Last 7 days</div>
<div class="hr" style="left:1100px;top:684.5px;width:790px"></div>
<svg class="abs" style="left:0;top:0" width="1920" height="1080" viewBox="0 0 1920 1080"><line x1="1168" y1="740.80" x2="1856" y2="740.80" stroke="#e3e3e3" stroke-width="1" stroke-dasharray="4 4"/><line x1="1168" y1="773.93" x2="1856" y2="773.93" stroke="#e3e3e3" stroke-width="1" stroke-dasharray="4 4"/><line x1="1168" y1="807.06" x2="1856" y2="807.06" stroke="#e3e3e3" stroke-width="1" stroke-dasharray="4 4"/><line x1="1168" y1="840.19" x2="1856" y2="840.19" stroke="#e3e3e3" stroke-width="1" stroke-dasharray="4 4"/><line x1="1168" y1="873.32" x2="1856" y2="873.32" stroke="#e3e3e3" stroke-width="1" stroke-dasharray="4 4"/><line x1="1168" y1="906.45" x2="1856" y2="906.45" stroke="#e3e3e3" stroke-width="1" stroke-dasharray="4 4"/><line x1="1168" y1="939.58" x2="1856" y2="939.58" stroke="#e3e3e3" stroke-width="1" stroke-dasharray="4 4"/><path d="M1169 746.87 H1504.00 a8 8 0 0 1 8 8 V759.87 a8 8 0 0 1 -8 8 H1169 Z" fill="#3ec9d6" fill-opacity="0.85"/><text x="1505.00" y="762.16" text-anchor="end" font-family="Liberation Sans" font-size="12" font-weight="700" fill="#fff">40</text><text x="1153.5" y="758.66" text-anchor="end" font-family="Liberation Sans" font-size="11" fill="#373d3f">Sun</text><path d="M1169 780.00 H1848.00 a8 8 0 0 1 8 8 V793.00 a8 8 0 0 1 -8 8 H1169 Z" fill="#3ec9d6" fill-opacity="0.85"/><text x="1849.00" y="795.29" text-anchor="end" font-family="Liberation Sans" font-size="12" font-weight="700" fill="#fff">80</text><text x="1153.5" y="791.79" text-anchor="end" font-family="Liberation Sans" font-size="11" fill="#373d3f">Mon</text><path d="M1169 813.12 H1332.00 a8 8 0 0 1 8 8 V826.12 a8 8 0 0 1 -8 8 H1169 Z" fill="#3ec9d6" fill-opacity="0.85"/><text x="1333.00" y="828.42" text-anchor="end" font-family="Liberation Sans" font-size="12" font-weight="700" fill="#fff">20</text><text x="1153.5" y="824.92" text-anchor="end" font-family="Liberation Sans" font-size="11" fill="#373d3f">Tue</text><path d="M1169 846.25 H1590.00 a8 8 0 0 1 8 8 V859.25 a8 8 0 0 1 -8 8 H1169 Z" fill="#3ec9d6" fill-opacity="0.85"/><text x="1591.00" y="861.55" text-anchor="end" font-family="Liberation Sans" font-size="12" font-weight="700" fill="#fff">50</text><text x="1153.5" y="858.05" text-anchor="end" font-family="Liberation Sans" font-size="11" fill="#373d3f">Wed</text><path d="M1169 879.38 H1332.00 a8 8 0 0 1 8 8 V892.38 a8 8 0 0 1 -8 8 H1169 Z" fill="#3ec9d6" fill-opacity="0.85"/><text x="1333.00" y="894.68" text-anchor="end" font-family="Liberation Sans" font-size="12" font-weight="700" fill="#fff">20</text><text x="1153.5" y="891.18" text-anchor="end" font-family="Liberation Sans" font-size="11" fill="#373d3f">Thu</text><path d="M1169 912.51 H1676.00 a8 8 0 0 1 8 8 V925.51 a8 8 0 0 1 -8 8 H1169 Z" fill="#3ec9d6" fill-opacity="0.85"/><text x="1677.00" y="927.81" text-anchor="end" font-family="Liberation Sans" font-size="12" font-weight="700" fill="#fff">60</text><text x="1153.5" y="924.31" text-anchor="end" font-family="Liberation Sans" font-size="11" fill="#373d3f">Fri</text><path d="M1169 945.64 H1418.00 a8 8 0 0 1 8 8 V958.64 a8 8 0 0 1 -8 8 H1169 Z" fill="#3ec9d6" fill-opacity="0.85"/><text x="1419.00" y="960.94" text-anchor="end" font-family="Liberation Sans" font-size="12" font-weight="700" fill="#fff">30</text><text x="1153.5" y="957.44" text-anchor="end" font-family="Liberation Sans" font-size="11" fill="#373d3f">Sat</text><line x1="1168" y1="972.7" x2="1856" y2="972.7" stroke="#e0e0e0" stroke-width="1"/><line x1="1167.5" y1="740.8" x2="1167.5" y2="972.7" stroke="#e6e6e6" stroke-width="1"/><line x1="1168.00" y1="972.7" x2="1168.00" y2="979" stroke="#e0e0e0" stroke-width="1"/><text x="1168.00" y="995.3" text-anchor="middle" font-family="Liberation Sans" font-size="12" fill="#373d3f">0</text><line x1="1340.00" y1="972.7" x2="1340.00" y2="979" stroke="#e0e0e0" stroke-width="1"/><text x="1340.00" y="995.3" text-anchor="middle" font-family="Liberation Sans" font-size="12" fill="#373d3f">20</text><line x1="1512.00" y1="972.7" x2="1512.00" y2="979" stroke="#e0e0e0" stroke-width="1"/><text x="1512.00" y="995.3" text-anchor="middle" font-family="Liberation Sans" font-size="12" fill="#373d3f">40</text><line x1="1684.00" y1="972.7" x2="1684.00" y2="979" stroke="#e0e0e0" stroke-width="1"/><text x="1684.00" y="995.3" text-anchor="middle" font-family="Liberation Sans" font-size="12" fill="#373d3f">60</text><line x1="1856.00" y1="972.7" x2="1856.00" y2="979" stroke="#e0e0e0" stroke-width="1"/><text x="1856.00" y="995.3" text-anchor="middle" font-family="Liberation Sans" font-size="12" fill="#373d3f">80</text></svg>
</body></html>
